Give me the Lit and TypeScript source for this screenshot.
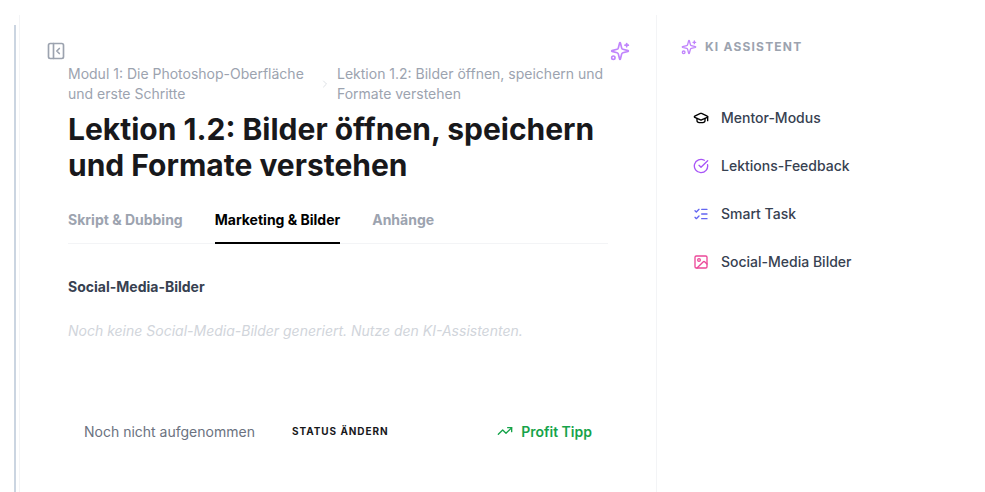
import { LitElement, html, css, svg } from 'lit';
import { customElement, state } from 'lit/decorators.js';

const sparkles = svg`<path d="M9.94 15.5A2 2 0 0 0 8.5 14.06l-6.14-1.58a.5.5 0 0 1 0-.96L8.5 9.94A2 2 0 0 0 9.94 8.5l1.58-6.14a.5.5 0 0 1 .96 0l1.58 6.14a2 2 0 0 0 1.44 1.44l6.14 1.58a.5.5 0 0 1 0 .96l-6.14 1.58a2 2 0 0 0-1.44 1.44l-1.58 6.14a.5.5 0 0 1-.96 0Z"/><path d="M20 3v4"/><path d="M22 5h-4"/><circle cx="4" cy="20" r="2"/>`;

interface Tool {
  label: string;
  color: string;
  icon: unknown;
}

const tools: Tool[] = [
  {
    label: 'Mentor-Modus',
    color: '#000000',
    icon: svg`<path d="M21.42 10.92a1 1 0 0 0 0-1.84L12.83 5.18a2 2 0 0 0-1.66 0L2.6 9.08a1 1 0 0 0 0 1.83l8.57 3.91a2 2 0 0 0 1.66 0z"/><path d="M22 10v6"/><path d="M6 12.5V16a6 3 0 0 0 12 0v-3.5"/>`,
  },
  {
    label: 'Lektions-Feedback',
    color: '#a855f7',
    icon: svg`<path d="M21.8 10A10 10 0 1 1 17 3.34"/><path d="m9 11 3 3L22 4"/>`,
  },
  {
    label: 'Smart Task',
    color: '#6366f1',
    icon: svg`<path d="M13 5h8"/><path d="M13 12h8"/><path d="M13 19h8"/><path d="m3 17 2 2 4-4"/><path d="m3 7 2 2 4-4"/>`,
  },
  {
    label: 'Social-Media Bilder',
    color: '#ec4899',
    icon: svg`<rect x="3" y="3" width="18" height="18" rx="2"/><circle cx="9" cy="9" r="2"/><path d="m21 15-3.09-3.09a2 2 0 0 0-2.82 0L6 21"/>`,
  },
];

@customElement('app-root')
export class AppRoot extends LitElement {
  @state()
  private activeTab = 'Marketing & Bilder';

  private tabs = ['Skript & Dubbing', 'Marketing & Bilder', 'Anhänge'];

  static styles = css`
    :host {
      display: flex;
      height: 492px;
      overflow: hidden;
      background: #fff;
      font-family: Inter, 'Liberation Sans', sans-serif;
      color: #111827;
    }
    svg {
      display: block;
      fill: none;
      stroke: currentColor;
      stroke-width: 2;
      stroke-linecap: round;
      stroke-linejoin: round;
      flex: none;
    }
    .rail {
      flex: none;
      width: 19px;
      padding: 25px 3px 0 14px;
      box-sizing: border-box;
    }
    .bar {
      height: 100%;
      background: #cbd5e1;
    }
    .main {
      flex: none;
      width: 638px;
      box-sizing: border-box;
      margin-top: 15px;
      border-left: 1px solid #f3f4f6;
      border-right: 1px solid #f3f4f6;
      padding: 26px 48px 0 48px;
    }
    .top {
      display: flex;
      justify-content: space-between;
      align-items: flex-start;
      margin-left: -22px;
      margin-right: -22px;
      height: 23px;
    }
    .collapse {
      color: #9ca3af;
    }
    .spark {
      color: #c084fc;
    }
    .crumbs {
      display: flex;
      align-items: center;
      font-size: 14px;
      line-height: 20px;
      color: #9ca3af;
    }
    .crumb-a {
      width: 245px;
    }
    .crumb-b {
      width: 270px;
    }
    .crumbs svg {
      width: 12px;
      height: 12px;
      margin: 0 6px 0 6px;
      color: #d1d5db;
      stroke-width: 1.5;
    }
    h1 {
      margin: 0;
      padding-top: 7px;
      font-size: 30px;
      line-height: 36px;
      font-weight: 700;
      color: #18181b;
    }
    .tabs {
      display: flex;
      gap: 32px;
      margin-top: 19px;
      border-bottom: 1px solid #f3f4f6;
    }
    .tab {
      padding: 8px 0 12px;
      font-size: 14px;
      line-height: 20px;
      font-weight: 700;
      color: #9ca3af;
      margin-bottom: -1px;
      border-bottom: 2px solid transparent;
    }
    .tab.on {
      color: #000;
      border-bottom-color: #000;
    }
    h2 {
      margin: 33px 0 0;
      font-size: 14px;
      line-height: 20px;
      font-weight: 700;
      color: #374151;
    }
    .empty {
      margin: 24px 0 0;
      font-size: 14px;
      line-height: 20px;
      font-style: italic;
      color: #d1d5db;
    }
    .foot {
      display: flex;
      align-items: center;
      margin-top: 80px;
      padding: 0 16px;
      height: 20px;
    }
    .status {
      font-size: 14px;
      color: #6b7280;
    }
    .change {
      margin-left: 37px;
      font-size: 10px;
      font-weight: 700;
      letter-spacing: 0.95px;
      color: #18181b;
    }
    .tip {
      margin-left: auto;
      display: flex;
      align-items: center;
      gap: 8px;
      font-size: 14px;
      font-weight: 600;
      color: #16a34a;
    }
    .side {
      flex: 1;
      margin-top: 15px;
      padding: 24px 24px 0 24px;
    }
    .side-head {
      display: flex;
      align-items: center;
      gap: 8px;
      font-size: 12px;
      line-height: 16px;
      font-weight: 700;
      letter-spacing: 1.2px;
      color: #9ca3af;
    }
    .side-head svg {
      color: #c084fc;
    }
    .list {
      margin-top: 53px;
      display: flex;
      flex-direction: column;
      gap: 28px;
      padding-left: 12px;
    }
    .item {
      display: flex;
      align-items: center;
      gap: 12px;
      font-size: 14px;
      line-height: 20px;
      font-weight: 500;
      color: #374151;
    }
  `;

  render() {
    return html`
      <div class="rail"><div class="bar"></div></div>
      <div class="main">
        <div class="top">
          <svg class="collapse" width="20" height="20" viewBox="0 0 24 24">
            <rect x="3" y="3" width="18" height="18" rx="2"></rect>
            <path d="M9 3v18"></path>
            <path d="m16 15-3-3 3-3"></path>
          </svg>
          <svg class="spark" width="20" height="20" viewBox="0 0 24 24">${sparkles}</svg>
        </div>
        <div class="crumbs">
          <span class="crumb-a">Modul 1: Die Photoshop-Oberfläche und erste Schritte</span>
          <svg viewBox="0 0 24 24"><path d="m9 18 6-6-6-6"></path></svg>
          <span class="crumb-b">Lektion 1.2: Bilder öffnen, speichern und Formate verstehen</span>
        </div>
        <h1>Lektion 1.2: Bilder öffnen, speichern und Formate verstehen</h1>
        <div class="tabs">
          ${this.tabs.map(
            t => html`<div class="tab ${t === this.activeTab ? 'on' : ''}">${t}</div>`
          )}
        </div>
        <h2>Social-Media-Bilder</h2>
        <p class="empty">Noch keine Social-Media-Bilder generiert. Nutze den KI-Assistenten.</p>
        <div class="foot">
          <span class="status">Noch nicht aufgenommen</span>
          <span class="change">STATUS ÄNDERN</span>
          <span class="tip">
            <svg width="16" height="16" viewBox="0 0 24 24">
              <path d="M16 7h6v6"></path>
              <path d="m22 7-8.5 8.5-5-5L2 17"></path>
            </svg>
            Profit Tipp
          </span>
        </div>
      </div>
      <div class="side">
        <div class="side-head">
          <svg width="16" height="16" viewBox="0 0 24 24">${sparkles}</svg>
          KI ASSISTENT
        </div>
        <div class="list">
          ${tools.map(
            t => html`
              <div class="item">
                <svg width="16" height="16" viewBox="0 0 24 24" style="color:${t.color}">${t.icon}</svg>
                ${t.label}
              </div>
            `
          )}
        </div>
      </div>
    `;
  }
}
